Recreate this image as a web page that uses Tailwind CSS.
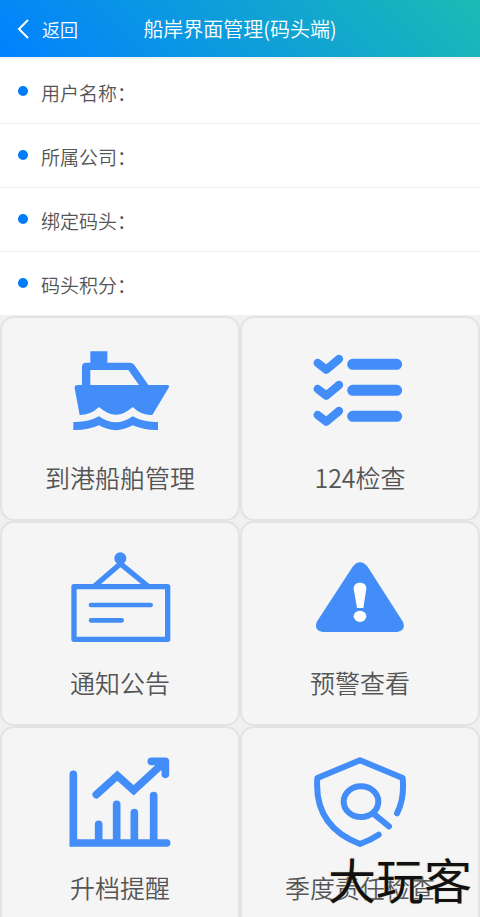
<!DOCTYPE html>
<html lang="zh-CN">
<head>
<meta charset="utf-8">
<meta name="viewport" content="width=device-width, initial-scale=1">
<title>船岸界面管理(码头端)</title>
<script src="https://cdn.jsdelivr.net/npm/@tailwindcss/browser@4"></script>
</head>
<body class="relative h-screen overflow-hidden bg-[#f0f0f0] font-['Noto_Sans_CJK_SC',sans-serif] font-[350] text-[#555]">
<header class="grid h-[57px] grid-cols-[1fr_auto_1fr] items-center bg-linear-45/srgb from-[#0081ff] to-[#1cbbb4] text-white">
  <button type="button" class="flex items-center gap-3 pl-4 text-lg leading-7">
    <svg class="h-5 w-3.5" viewBox="0 0 14 20" fill="none" stroke="currentColor" stroke-width="2" aria-hidden="true"><path d="M12 1 3 10l9 9"/></svg>
    返回
  </button>
  <h1 class="text-xl leading-7">船岸界面管理(码头端)</h1>
</header>
<main>
  <ul class="border-t-2 border-[#eef5f8] bg-white text-[19px] leading-7">
    <li class="flex h-16 items-center gap-[13px] px-[18px] pt-[3px]"><span class="-mt-1 size-2.5 rounded-full bg-[#007cf8]"></span>用户名称：</li>
    <li class="flex h-16 items-center gap-[13px] border-t border-[#ececec] px-[18px] pt-[3px]"><span class="-mt-1 size-2.5 rounded-full bg-[#007cf8]"></span>所属公司：</li>
    <li class="flex h-16 items-center gap-[13px] border-t border-[#ececec] px-[18px] pt-[3px]"><span class="-mt-1 size-2.5 rounded-full bg-[#007cf8]"></span>绑定码头：</li>
    <li class="flex h-16 items-center gap-[13px] border-t border-[#ececec] px-[18px] pt-[3px]"><span class="-mt-1 size-2.5 rounded-full bg-[#007cf8]"></span>码头积分：</li>
  </ul>
  <nav class="grid auto-rows-[205px] grid-cols-2 pt-px text-[25px] leading-9">
    <a href="#" class="flex flex-col items-center gap-3.5 rounded-[14px] border-2 border-[#e3e3e3] bg-[#f5f5f5] pt-[17px]">
      <svg class="h-[110px] w-[150px] text-[#428df8]" viewBox="-15 0 450 330" fill="currentColor" aria-hidden="true">
        <path fill-rule="evenodd" d="M121 49h51v34h66q10 0 15 7l42 60h56q9 0 5 8l-49 82q-32 2-59-24-50 46-101 0-25 24-58 24L74 160q-1-10 10-10h12V95q0-12 12-12h13zM121 105v45h146l-32-45z"/>
        <path d="M70 261q43 2 77-17 50 36 101 0 34 19 76 17v24q-42 1-76-14-51 29-101 0-34 15-77 14z"/>
      </svg>
      到港船舶管理
    </a>
    <a href="#" class="flex flex-col items-center gap-3.5 rounded-[14px] border-2 border-[#e3e3e3] bg-[#f5f5f5] pt-[17px]">
      <svg class="h-[110px] w-[150px] text-[#428df8]" viewBox="-15 0 450 330" fill="none" stroke="currentColor" stroke-linecap="round" stroke-linejoin="round" aria-hidden="true">
        <path stroke-width="25" d="m83 84 26 20 38-32M83 162l26 20 38-32M83 240l26 20 38-32"/>
        <path stroke-width="33" d="M188 88h132M188 166h132M188 244h132"/>
      </svg>
      124检查
    </a>
    <a href="#" class="flex flex-col items-center gap-3.5 rounded-[14px] border-2 border-[#e3e3e3] bg-[#f5f5f5] pt-[17px]">
      <svg class="h-[110px] w-[150px] text-[#428df8]" viewBox="-15 0 450 330" fill="none" stroke="currentColor" stroke-linecap="round" stroke-linejoin="round" aria-hidden="true">
        <circle cx="211" cy="55" r="18" fill="currentColor" stroke="none"/>
        <path stroke-width="16" stroke-linecap="butt" d="m134 138 77-67 82 67"/>
        <path stroke-width="16" d="M72 140h281v158H72z"/>
        <path stroke-width="14" d="M123 195h179M123 241h92"/>
      </svg>
      通知公告
    </a>
    <a href="#" class="flex flex-col items-center gap-3.5 rounded-[14px] border-2 border-[#e3e3e3] bg-[#f5f5f5] pt-[17px]">
      <svg class="h-[110px] w-[150px] text-[#428df8]" viewBox="-15 0 450 330" fill="currentColor" aria-hidden="true">
        <path d="M188 80q22-26 45 0l106 166q10 24-18 30H98q-27-5-18-30z"/>
        <path fill="#fff" d="M191 146c0-12 8-18 19-18s19 6 19 18l-9 58h-19z"/>
        <ellipse cx="210" cy="229" rx="19" ry="17" fill="#fff"/>
      </svg>
      预警查看
    </a>
    <a href="#" class="flex flex-col items-center gap-3.5 rounded-[14px] border-2 border-[#e3e3e3] bg-[#f5f5f5] pt-[17px]">
      <svg class="h-[110px] w-[150px] text-[#428df8]" viewBox="-15 0 450 330" fill="none" stroke="currentColor" stroke-width="23" stroke-linecap="round" aria-hidden="true">
        <path d="M70 88v206h280M146 238v50M200 178v110M253 203v85M311 152v136"/>
        <path d="m139 149 63-57 49 44 91-84"/>
        <path d="M304 49h42v39" stroke-linejoin="round"/>
      </svg>
      升档提醒
    </a>
    <a href="#" class="flex flex-col items-center gap-3.5 rounded-[14px] border-2 border-[#e3e3e3] bg-[#f5f5f5] pt-[17px]">
      <svg class="h-[110px] w-[150px] text-[#428df8]" viewBox="-15 0 450 330" fill="none" stroke="currentColor" stroke-width="18" stroke-linecap="round" stroke-linejoin="round" aria-hidden="true">
        <path d="M321 205q23-44 17-106L210 46 82 99q-11 145 128 198 32-12 56-28"/>
        <ellipse cx="213" cy="170" rx="52" ry="46"/>
        <path d="m253 208 44 36"/>
      </svg>
      季度责任检查
    </a>
  </nav>
</main>
<div class="absolute right-2 bottom-1 text-[48px] leading-[70px] font-normal text-[#111] [text-shadow:0_0_2px_#d8d2b8]">大玩客</div>
</body>
</html>
